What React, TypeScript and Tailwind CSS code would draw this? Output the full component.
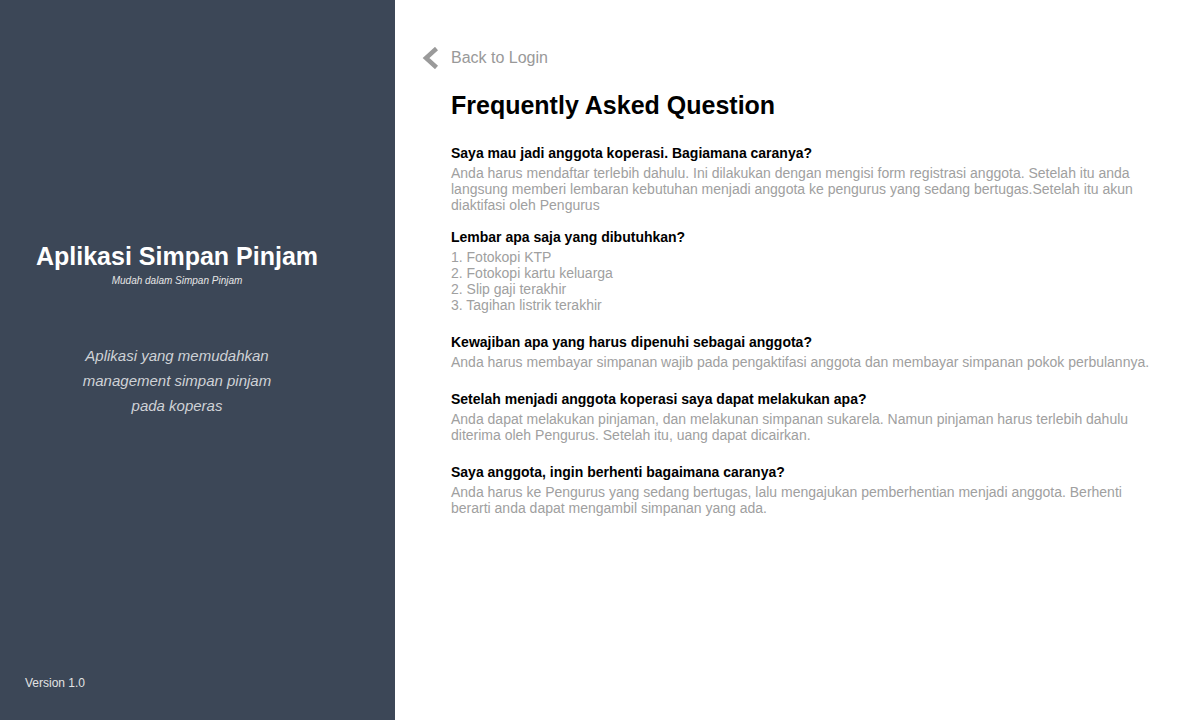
const faqs = [
  {
    q: 'Saya mau jadi anggota koperasi. Bagiamana caranya?',
    a: [
      'Anda harus mendaftar terlebih dahulu. Ini dilakukan dengan mengisi form registrasi anggota. Setelah itu anda langsung memberi lembaran kebutuhan menjadi anggota ke pengurus yang sedang bertugas.Setelah itu akun diaktifasi oleh Pengurus',
    ],
  },
  {
    q: 'Lembar apa saja yang dibutuhkan?',
    a: ['1. Fotokopi KTP', '2. Fotokopi kartu keluarga', '2. Slip gaji terakhir', '3. Tagihan listrik terakhir'],
  },
  {
    q: 'Kewajiban apa yang harus dipenuhi sebagai anggota?',
    a: ['Anda harus membayar simpanan wajib pada pengaktifasi anggota dan membayar simpanan pokok perbulannya.'],
  },
  {
    q: 'Setelah menjadi anggota koperasi saya dapat melakukan apa?',
    a: [
      'Anda dapat melakukan pinjaman, dan melakunan simpanan sukarela. Namun pinjaman harus terlebih dahulu diterima oleh Pengurus. Setelah itu, uang dapat dicairkan.',
    ],
  },
  {
    q: 'Saya anggota, ingin berhenti bagaimana caranya?',
    a: [
      'Anda harus ke Pengurus yang sedang bertugas, lalu mengajukan pemberhentian menjadi anggota. Berhenti berarti anda dapat mengambil simpanan yang ada.',
    ],
  },
]

function Sidebar() {
  return (
    <aside className="w-[395px] shrink-0 bg-[#3c4757] flex flex-col pr-[41px] pt-[242px] pb-[30px]">
      <div className="text-center">
        <h1 className="text-[25px] leading-[29px] font-bold text-white">Aplikasi Simpan Pinjam</h1>
        <p className="text-[10px] leading-[12px] italic text-[#e6e6e6] mt-[4px]">Mudah dalam Simpan Pinjam</p>
      </div>
      <p className="mt-[56px] text-center text-[15px] leading-[25px] italic text-[#cfd2d6]">
        Aplikasi yang memudahkan
        <br />
        management simpan pinjam
        <br />
        pada koperas
      </p>
      <div className="mt-auto pl-[25px] text-[12px] leading-[14px] text-[#e3e3e3]">Version 1.0</div>
    </aside>
  )
}

function App() {
  return (
    <div className="flex min-h-[720px] h-screen bg-white font-['Liberation_Sans',Arial,sans-serif]">
      <Sidebar />
      <main className="flex-1 pl-[27px] pr-[40px] pt-[47px]">
        <a href="#" className="flex items-center gap-[12px] text-[16px] leading-[20px] text-[#999999]">
          <svg width="17" height="22" viewBox="0 0 17 22" className="shrink-0">
            <path d="M14.5 1.5 L4 11 L14.5 20.5" fill="none" stroke="#9a9a9a" strokeWidth="4.5" strokeLinejoin="miter" />
          </svg>
          <span>Back to Login</span>
        </a>
        <div className="pl-[29px]">
          <h2 className="mt-[22px] text-[25px] leading-[29px] font-bold text-black">Frequently Asked Question</h2>
          <div className="mt-[25px] flex flex-col">
            {faqs.map((f, i) => (
              <div key={i} className={i === 0 ? '' : i === 1 ? 'mt-[16px]' : 'mt-[21px]'}>
                <div className="text-[14px] leading-[16px] font-bold text-black">{f.q}</div>
                <div className="mt-[4px] text-[14px] leading-[16px] text-[#a0a0a0]">
                  {f.a.map((line, j) => (
                    <div key={j}>{line}</div>
                  ))}
                </div>
              </div>
            ))}
          </div>
        </div>
      </main>
    </div>
  )
}

export default App
